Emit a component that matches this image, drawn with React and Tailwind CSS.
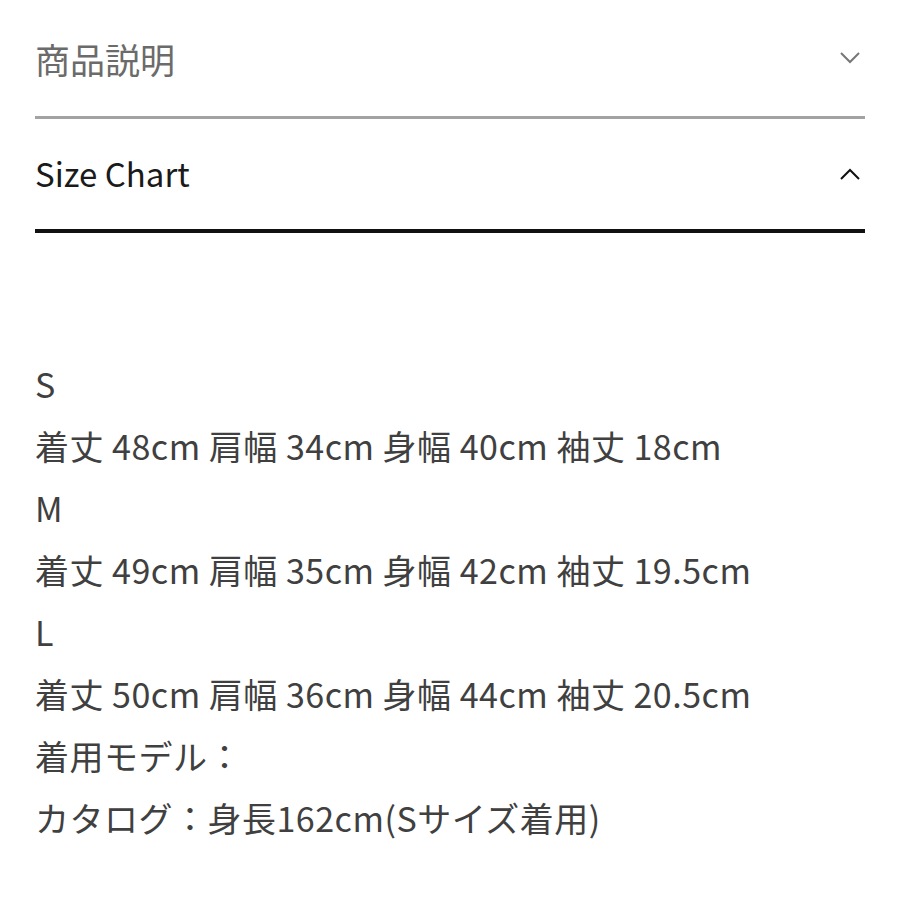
export default function App() {
  const font = { fontFamily: '"Noto Sans CJK JP", "Noto Sans", sans-serif' };
  const lines = [
    "S",
    "着丈 48cm 肩幅 34cm 身幅 40cm 袖丈 18cm",
    "M",
    "着丈 49cm 肩幅 35cm 身幅 42cm 袖丈 19.5cm",
    "L",
    "着丈 50cm 肩幅 36cm 身幅 44cm 袖丈 20.5cm",
    "着用モデル：",
    "カタログ：身長162cm(Sサイズ着用)",
  ];
  return (
    <div className="w-[900px] h-[900px] bg-white px-[35px]" style={font}>
      <div className="flex items-center justify-between h-[119px] pt-[2px] border-b-[3px] border-[#a3a3a3]">
        <span className="text-[35px] text-[#6b6b6b]">商品説明</span>
        <svg width="22" height="14" viewBox="0 0 22 14" className="mr-[4px] mb-[2px]">
          <path d="M2 2 L11 11 L20 2" fill="none" stroke="#777" strokeWidth="2" />
        </svg>
      </div>
      <div className="flex items-center justify-between h-[114px] border-b-[4px] border-[#111]">
        <span className="text-[33px] text-[#1a1a1a]">Size Chart</span>
        <svg width="22" height="14" viewBox="0 0 22 14" className="mr-[4px]">
          <path d="M2 12 L11 3 L20 12" fill="none" stroke="#111" strokeWidth="2" />
        </svg>
      </div>
      <div className="pt-[120px] text-[34px] tracking-[0.5px] text-[#404040] leading-[62px]">
        {lines.map((l, i) => (
          <div key={i}>{l}</div>
        ))}
      </div>
    </div>
  );
}
